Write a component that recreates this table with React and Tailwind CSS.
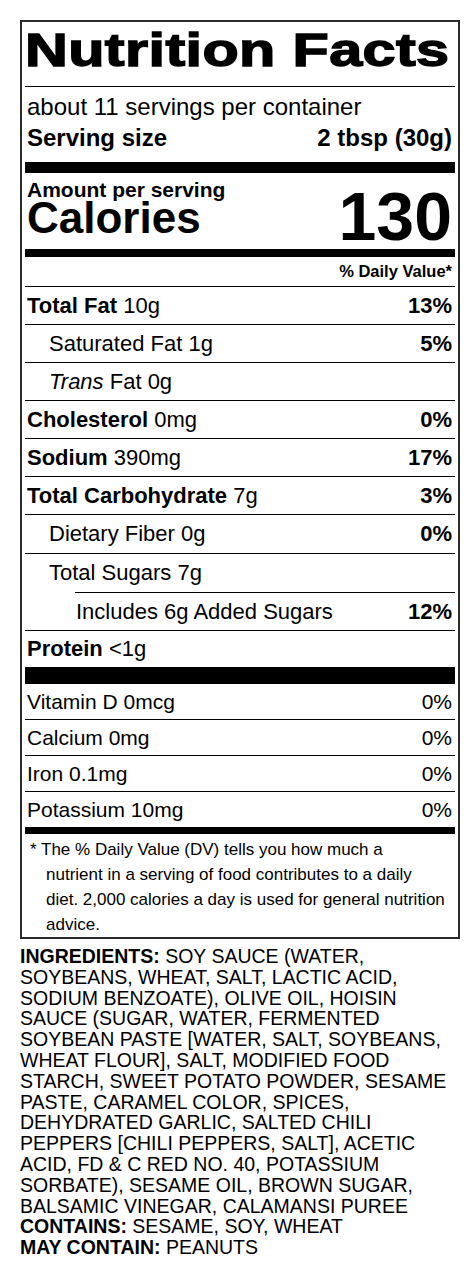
import React from 'react';

const nutrients = [
  { label: 'Total Fat', amount: '10g', dv: '13%', bold: true },
  { label: 'Saturated Fat', amount: '1g', dv: '5%', indent: 1 },
  { label: 'Trans', amount: '0g', indent: 1, trans: true },
  { label: 'Cholesterol', amount: '0mg', dv: '0%', bold: true },
  { label: 'Sodium', amount: '390mg', dv: '17%', bold: true },
  { label: 'Total Carbohydrate', amount: '7g', dv: '3%', bold: true },
  { label: 'Dietary Fiber', amount: '0g', dv: '0%', indent: 1, tall: true },
  { label: 'Total Sugars', amount: '7g', indent: 1, tall: true },
  { label: 'Includes 6g Added Sugars', dv: '12%', indent: 2 },
  { label: 'Protein', amount: '<1g', bold: true, short: true },
];

const vitamins = [
  { label: 'Vitamin D 0mcg', dv: '0%' },
  { label: 'Calcium 0mg', dv: '0%' },
  { label: 'Iron 0.1mg', dv: '0%' },
  { label: 'Potassium 10mg', dv: '0%' },
];

const ingredientLines = [
  'SOYBEANS, WHEAT, SALT, LACTIC ACID,',
  'SODIUM BENZOATE), OLIVE OIL, HOISIN',
  'SAUCE (SUGAR, WATER, FERMENTED',
  'SOYBEAN PASTE [WATER, SALT, SOYBEANS,',
  'WHEAT FLOUR], SALT, MODIFIED FOOD',
  'STARCH, SWEET POTATO POWDER, SESAME',
  'PASTE, CARAMEL COLOR, SPICES,',
  'DEHYDRATED GARLIC, SALTED CHILI',
  'PEPPERS [CHILI PEPPERS, SALT], ACETIC',
  'ACID, FD & C RED NO. 40, POTASSIUM',
  'SORBATE), SESAME OIL, BROWN SUGAR,',
  'BALSAMIC VINEGAR, CALAMANSI PUREE',
];

const NutrientRow = ({ item }) => {
  const pad = item.indent === 2 ? 'pl-[51px]' : item.indent === 1 ? 'pl-[24px]' : 'pl-[2px]';
  const h = item.tall ? 'h-[38px]' : item.short ? 'h-[36px]' : 'h-[37px]';
  return (
    <div className={`${h} flex items-center justify-between pr-[3px] text-[22px] leading-none ${pad}`}>
      <span>
        {item.trans ? (
          <>
            <i>Trans</i> Fat {item.amount}
          </>
        ) : item.bold ? (
          <>
            <b>{item.label}</b> {item.amount}
          </>
        ) : (
          <>
            {item.label}
            {item.amount ? ` ${item.amount}` : ''}
          </>
        )}
      </span>
      {item.dv && <b>{item.dv}</b>}
    </div>
  );
};

export default function App() {
  return (
    <div className="bg-white min-h-[1268px] pt-[20px] pl-[20px] text-black font-['Liberation_Sans',Arial,sans-serif]">
      <div className="w-[440px] border-2 border-[#2b2b2b] px-[3px]">
        {/* header */}
        <div className="flex pt-[5px] mb-[13px]">
          <div className="text-[46px] leading-[46px] font-bold tracking-[0.3px] scale-x-[1.29] origin-left [-webkit-text-stroke:1.4px_#000] whitespace-nowrap">
            Nutrition Facts
          </div>
        </div>
        <div className="h-px bg-black" />
        <div className="pl-[2px] pr-[3px] mt-[7px] text-[24px] leading-[26px]">
          <div>about 11 servings per container</div>
          <div className="mt-[5px] flex justify-between font-bold">
            <span>Serving size</span>
            <span>2 tbsp (30g)</span>
          </div>
        </div>
        <div className="mt-[11px] h-[11px] bg-black" />

        {/* calories */}
        <div className="mt-[6px] h-[70px] flex justify-between pl-[2px] pr-[3px] font-bold">
          <div className="flex flex-col">
            <div className="text-[21px] leading-[22px]">Amount per serving</div>
            <div className="mt-[1px] text-[44px] leading-[32px]">Calories</div>
          </div>
          <div className="self-end text-[68px] leading-[65px]">130</div>
        </div>
        <div className="h-[8px] bg-black" />
        <div className="h-[29px] flex items-center justify-end pr-[3px] text-[16.5px] font-bold">
          % Daily Value*
        </div>

        {/* nutrients */}
        {nutrients.map((item, i) => (
          <React.Fragment key={i}>
            <div className={`h-px bg-black ${item.indent === 2 ? 'ml-[50px]' : ''}`} />
            <NutrientRow item={item} />
          </React.Fragment>
        ))}
        <div className="h-[17px] bg-black" />

        {/* vitamins & minerals */}
        {vitamins.map((v, i) => (
          <React.Fragment key={v.label}>
            {i > 0 && <div className="h-px bg-black" />}
            <div className="h-[35px] flex items-center justify-between pl-[2px] pr-[3px] text-[21px] leading-none">
              <span>{v.label}</span>
              <span>{v.dv}</span>
            </div>
          </React.Fragment>
        ))}
        <div className="h-[7px] bg-black" />

        {/* footnote */}
        <p className="pt-[3px] pl-[21px] -indent-[16px] text-[17px] leading-[25px] whitespace-nowrap">
          * The % Daily Value (DV) tells you how much a
          <br />
          nutrient in a serving of food contributes to a daily
          <br />
          diet. 2,000 calories a day is used for general nutrition
          <br />
          advice.
        </p>
      </div>

      {/* ingredients */}
      <div className="w-[440px] mt-[7px] text-[19.5px] leading-[20.8px] whitespace-nowrap">
        <p>
          <b>INGREDIENTS:</b> SOY SAUCE (WATER,
          {ingredientLines.map((line) => (
            <React.Fragment key={line}>
              <br />
              {line}
            </React.Fragment>
          ))}
        </p>
        <p>
          <b>CONTAINS:</b> SESAME, SOY, WHEAT
        </p>
        <p>
          <b>MAY CONTAIN:</b> PEANUTS
        </p>
      </div>
    </div>
  );
}
